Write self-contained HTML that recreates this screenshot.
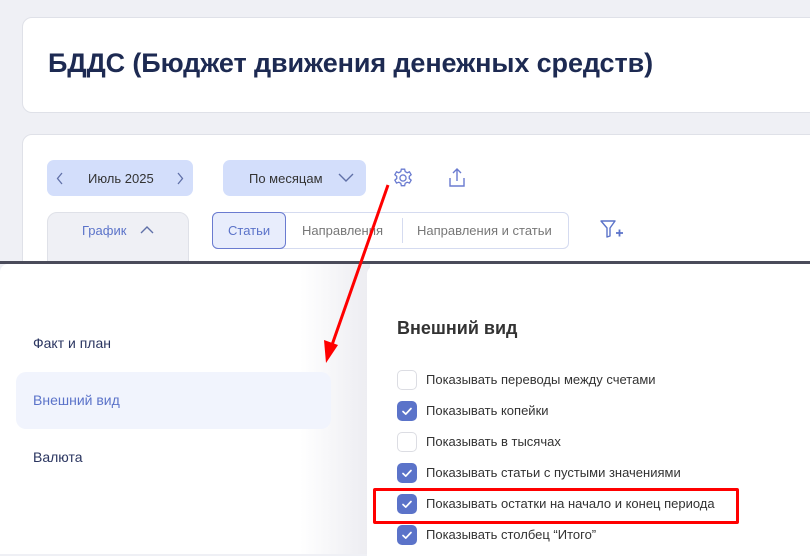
<!DOCTYPE html>
<html><head><meta charset="utf-8"><style>
*{margin:0;padding:0;box-sizing:border-box}
body{width:810px;height:550px;overflow:hidden;background:#eff0f5;font-family:"Liberation Sans","Noto Sans CJK SC",sans-serif;position:relative}
.abs{position:absolute}
.card{background:#fff;border:1px solid #dfe1e8;border-radius:10px}
.t{white-space:nowrap}
.cb{position:absolute;left:397px;width:20px;height:20px;border-radius:5px;border:1px solid #dcdde3;background:#fff}
.cb.on{background:#5b73c9;border-color:#5b73c9}
.cb svg{position:absolute;left:0;top:0}
.lbl{position:absolute;left:426px;font-size:13px;color:#333;white-space:nowrap}
</style></head><body>
<div class="abs card" style="left:22px;top:17px;width:800px;height:96px"></div>
<div class="abs t" style="left:48px;top:48px;font-size:27px;font-weight:bold;color:#1d2a52;letter-spacing:-0.1px">БДДС (Бюджет движения денежных средств)</div>
<div class="abs card" style="left:22px;top:134px;width:800px;height:140px"></div>
<div class="abs" style="left:47px;top:160px;width:146px;height:36px;background:#d3defb;border-radius:7px"></div>
<svg class="abs" style="left:56px;top:172px" width="8" height="13"><path d="M6 1L1.5 6.5 6 12" fill="none" stroke="#6070a8" stroke-width="1.3"/></svg>
<div class="abs t" style="left:88px;top:171px;font-size:13px;color:#333">Июль 2025</div>
<svg class="abs" style="left:176px;top:172px" width="8" height="13"><path d="M2 1l4.5 5.5L2 12" fill="none" stroke="#6070a8" stroke-width="1.3"/></svg>
<div class="abs" style="left:223px;top:160px;width:143px;height:36px;background:#d3defb;border-radius:7px"></div>
<div class="abs t" style="left:249px;top:171px;font-size:13px;color:#333">По месяцам</div>
<svg class="abs" style="left:338px;top:173px" width="16" height="10"><path d="M1 1l7 7 7-7" fill="none" stroke="#6070a8" stroke-width="1.4"/></svg>
<svg class="abs" style="left:392px;top:167px" width="22" height="22" viewBox="0 0 20 20"><circle cx="10" cy="10" r="2.8" fill="none" stroke="#6a7bd0" stroke-width="1.2"/><path d="M8.5 2h3l.5 2.2 1.8 1 2.1-.8 1.5 2.6-1.7 1.5v2l1.7 1.5-1.5 2.6-2.1-.8-1.8 1-.5 2.2h-3l-.5-2.2-1.8-1-2.1.8-1.5-2.6 1.7-1.5v-2L2.6 7l1.5-2.6 2.1.8 1.8-1z" fill="none" stroke="#6a7bd0" stroke-width="1.2"/></svg>
<svg class="abs" style="left:447px;top:167px" width="20" height="22" viewBox="0 0 20 22"><path d="M10 14V2M6 6l4-4 4 4M3 11v8h14v-8" fill="none" stroke="#6a7bd0" stroke-width="1.4"/></svg>
<div class="abs" style="left:47px;top:212px;width:142px;height:60px;background:#eff0f5;border:1px solid #dfe1e8;border-radius:10px"></div>
<div class="abs t" style="left:82px;top:223px;font-size:13px;color:#5b73c9">График</div>
<svg class="abs" style="left:140px;top:225px" width="14" height="9"><path d="M1 8l6-6 6 6" fill="none" stroke="#6070a8" stroke-width="1.4"/></svg>
<div class="abs" style="left:212px;top:212px;width:357px;height:37px;border:1px solid #d5dbf0;border-radius:6px;background:#fff"></div>
<div class="abs" style="left:212px;top:212px;width:74px;height:37px;border:1px solid #6a7bd0;border-radius:6px;background:#e8edfc"></div>
<div class="abs t" style="left:228px;top:223px;font-size:13px;color:#5b73c9">Статьи</div>
<div class="abs t" style="left:302px;top:223px;font-size:13px;color:#777">Направления</div>
<div class="abs" style="left:402px;top:218px;width:1px;height:25px;background:#d5dbf0"></div>
<div class="abs t" style="left:417px;top:223px;font-size:13px;color:#777">Направления и статьи</div>
<svg class="abs" style="left:600px;top:220px" width="26" height="20" viewBox="0 0 26 20"><path d="M1 1h14l-5 7v8l-3 1V8z" fill="none" stroke="#5b73c9" stroke-width="1.4" stroke-linejoin="round"/><path d="M16 13h7M19.5 9.5v7" stroke="#5b73c9" stroke-width="1.8"/></svg>
<div class="abs" style="left:0;top:261px;width:810px;height:3px;background:#4a4b5a"></div>
<div class="abs" style="left:0;top:264px;width:810px;height:290px;background:#fff;border-top-left-radius:8px"></div>
<div class="abs" style="left:300px;top:264px;width:70px;height:290px;background:linear-gradient(90deg,rgba(244,244,247,0),#ececf1)"></div>
<div class="abs" style="left:367px;top:266px;width:460px;height:290px;background:#fff;border-top-left-radius:8px"></div>
<div class="abs t" style="left:33px;top:335px;font-size:14px;color:#2a3560">Факт и план</div>
<div class="abs" style="left:16px;top:372px;width:315px;height:57px;background:#f1f4fd;border-radius:10px"></div>
<div class="abs t" style="left:33px;top:392px;font-size:14px;color:#5b73c9">Внешний вид</div>
<div class="abs t" style="left:33px;top:449px;font-size:14px;color:#2a3560">Валюта</div>
<div class="abs t" style="left:397px;top:318px;font-size:18px;font-weight:bold;color:#333">Внешний вид</div>
<div class="cb" style="top:370px"></div><div class="lbl" style="top:372px">Показывать переводы между счетами</div>
<div class="cb on" style="top:401px"><svg width="18" height="18"><path d="M5 9.5l2.8 2.6L13 6.5" fill="none" stroke="#fff" stroke-width="1.7" stroke-linecap="round" stroke-linejoin="round"/></svg></div><div class="lbl" style="top:403px">Показывать копейки</div>
<div class="cb" style="top:432px"></div><div class="lbl" style="top:434px">Показывать в тысячах</div>
<div class="cb on" style="top:463px"><svg width="18" height="18"><path d="M5 9.5l2.8 2.6L13 6.5" fill="none" stroke="#fff" stroke-width="1.7" stroke-linecap="round" stroke-linejoin="round"/></svg></div><div class="lbl" style="top:465px">Показывать статьи с пустыми значениями</div>
<div class="cb on" style="top:494px"><svg width="18" height="18"><path d="M5 9.5l2.8 2.6L13 6.5" fill="none" stroke="#fff" stroke-width="1.7" stroke-linecap="round" stroke-linejoin="round"/></svg></div><div class="lbl" style="top:496px">Показывать остатки на начало и конец периода</div>
<div class="cb on" style="top:525px"><svg width="18" height="18"><path d="M5 9.5l2.8 2.6L13 6.5" fill="none" stroke="#fff" stroke-width="1.7" stroke-linecap="round" stroke-linejoin="round"/></svg></div><div class="lbl" style="top:527px">Показывать столбец “Итого”</div>
<div class="abs" style="left:373px;top:488px;width:366px;height:36px;border:3px solid #f00;border-radius:2px"></div>
<svg class="abs" style="left:0;top:0" width="810" height="550"><line x1="388" y1="185" x2="332" y2="345" stroke="#f00" stroke-width="3"/><path d="M326 363l-2-23 14 5z" fill="#f00"/></svg>
</body></html>
